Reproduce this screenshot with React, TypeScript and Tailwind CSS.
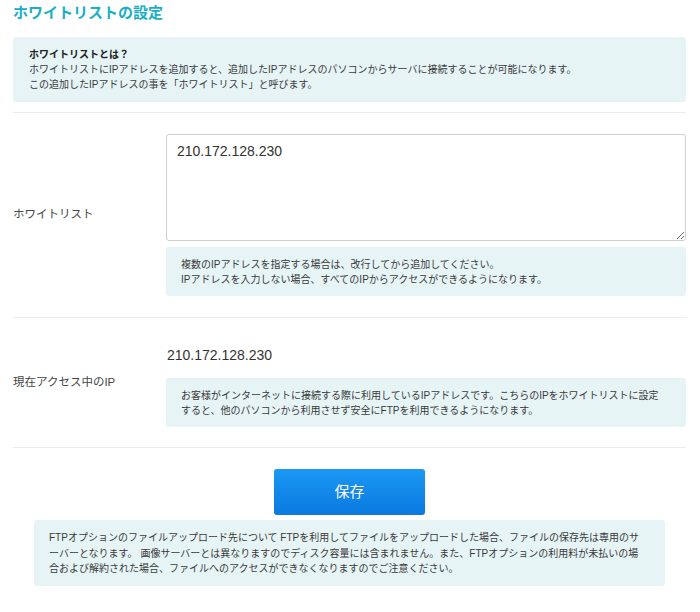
const font = {
  fontFamily: '"Liberation Sans", "Noto Sans CJK JP", sans-serif',
};

function Divider() {
  return <div className="h-px bg-[#ececec]" />;
}

function Hint({ children }: { children: React.ReactNode }) {
  return (
    <div className="rounded-[3px] bg-[#e6f4f6] px-[15px] pt-[10px] pb-[9px] text-[10px] leading-[15px] text-[#3a3a3a]">
      {children}
    </div>
  );
}

export default function App() {
  return (
    <div
      className="w-[700px] h-[612px] bg-white pl-[13px] pr-[14px] pt-[3px] text-[#333]"
      style={font}
    >
      <h1 className="text-[15px] leading-[20px] font-bold text-[#1aaec6]">
        ホワイトリストの設定
      </h1>

      {/* About box */}
      <div className="mt-[14px] rounded-[3px] bg-[#e6f4f6] px-[16px] pt-[10px] pb-[10px] text-[10px] leading-[15px] text-[#3a3a3a]">
        <p className="font-bold text-[#222]">ホワイトリストとは？</p>
        <p>
          ホワイトリストにIPアドレスを追加すると、追加したIPアドレスのパソコンからサーバに接続することが可能になります。
        </p>
        <p>この追加したIPアドレスの事を「ホワイトリスト」と呼びます。</p>
      </div>

      <div className="mt-[10px]">
        <Divider />
      </div>

      {/* Whitelist row */}
      <div className="flex items-center pt-[21px] pb-[21px]">
        <div className="w-[153px] shrink-0 text-[11.5px] text-[#444]">
          ホワイトリスト
        </div>
        <div className="flex-1 flex flex-col gap-[6px]">
          <textarea
            className="h-[107px] w-full rounded-[3px] border border-[#cfcfcf] px-[10px] pt-[6px] text-[14px] leading-[20px] text-[#333] outline-none"
            style={font}
            defaultValue="210.172.128.230"
          />
          <Hint>
            複数のIPアドレスを指定する場合は、改行してから追加してください。
            <br />
            IPアドレスを入力しない場合、すべてのIPからアクセスができるようになります。
          </Hint>
        </div>
      </div>

      <Divider />

      {/* Current IP row */}
      <div className="flex items-center pt-[21px] pb-[20px]">
        <div className="w-[153px] shrink-0 text-[11.5px] text-[#444]">
          現在アクセス中のIP
        </div>
        <div className="flex-1 flex flex-col gap-[7px]">
          <div className="pl-[1px] text-[14px] leading-[32px] text-[#333]">
            210.172.128.230
          </div>
          <Hint>
            お客様がインターネットに接続する際に利用しているIPアドレスです。こちらのIPをホワイトリストに設定
            <br />
            すると、他のパソコンから利用させず安全にFTPを利用できるようになります。
          </Hint>
        </div>
      </div>

      <Divider />

      <div className="mt-[21px] flex justify-center">
        <button className="h-[46px] w-[151px] rounded-[3px] bg-gradient-to-b from-[#1b98f4] to-[#0a79e0] text-[15px] text-white">
          保存
        </button>
      </div>

      <div className="mx-[21px] mt-[5px] rounded-[3px] bg-[#e6f4f6] px-[15px] pt-[10px] pb-[9px] text-[10px] leading-[15.5px] text-[#3a3a3a]">
        FTPオプションのファイルアップロード先について FTPを利用してファイルをアップロードした場合、ファイルの保存先は専用のサ
        <br />
        ーバーとなります。 画像サーバーとは異なりますのでディスク容量には含まれません。また、FTPオプションの利用料が未払いの場
        <br />
        合および解約された場合、ファイルへのアクセスができなくなりますのでご注意ください。
      </div>
    </div>
  );
}
